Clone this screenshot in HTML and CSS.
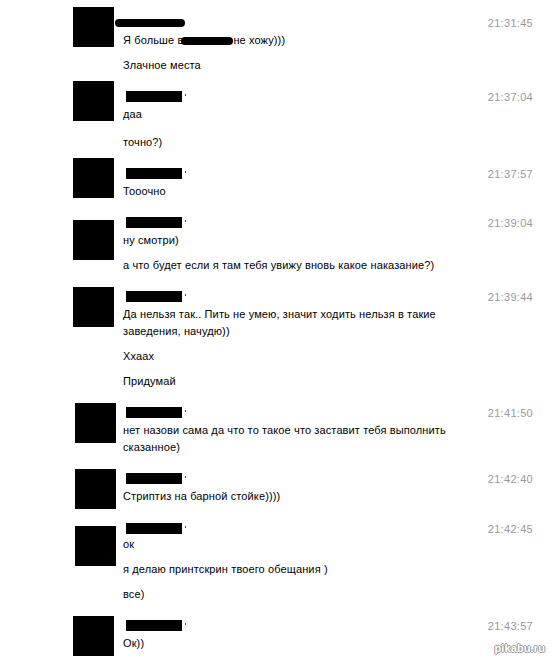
FILE: index.html
```html
<html>
<link rel="stylesheet" href="styles.css">

<head>
    <title>История сообщений</title>
</head>

<body>
    <div class="history">
        <div class="msg">
            <div class="ava"></div>
            <div class="body">
                <div class="head"><span class="name blob"></span><span class="time">21:31:45</span></div>
                <p>Я больше в<span class="hide"></span>не хожу)))</p>
                <p>Злачное места</p>
            </div>
        </div>

        <div class="msg">
            <div class="ava"></div>
            <div class="body">
                <div class="head"><span class="name"></span><span class="dot"></span><span class="time">21:37:04</span></div>
                <p>даа</p>
                <p class="far">точно?)</p>
            </div>
        </div>

        <div class="msg">
            <div class="ava"></div>
            <div class="body">
                <div class="head"><span class="name"></span><span class="dot"></span><span class="time">21:37:57</span></div>
                <p>Тооочно</p>
            </div>
        </div>

        <div class="msg">
            <div class="ava down"></div>
            <div class="body">
                <div class="head"><span class="name"></span><span class="dot"></span><span class="time">21:39:04</span></div>
                <p>ну смотри)</p>
                <p>а что будет если я там тебя увижу вновь какое наказание?)</p>
            </div>
        </div>

        <div class="msg">
            <div class="ava flat"></div>
            <div class="body">
                <div class="head"><span class="name"></span><span class="dot"></span><span class="time">21:39:44</span></div>
                <p>Да нельзя так.. Пить не умею, значит ходить нельзя в такие заведения, начудю))</p>
                <p>Ххаах</p>
                <p>Придумай</p>
            </div>
        </div>

        <div class="msg">
            <div class="ava flat shift"></div>
            <div class="body">
                <div class="head"><span class="name"></span><span class="dot"></span><span class="time">21:41:50</span></div>
                <p>нет назови сама да что то такое что заставит тебя выполнить сказанное)</p>
            </div>
        </div>

        <div class="msg">
            <div class="ava flat shift"></div>
            <div class="body">
                <div class="head"><span class="name"></span><span class="dot"></span><span class="time">21:42:40</span></div>
                <p>Стриптиз на барной стойке))))</p>
            </div>
        </div>

        <div class="msg tight">
            <div class="ava down shift"></div>
            <div class="body">
                <div class="head"><span class="name"></span><span class="dot"></span><span class="time">21:42:45</span></div>
                <p>ок</p>
                <p>я делаю принтскрин твоего обещания )</p>
                <p>все)</p>
            </div>
        </div>

        <div class="msg">
            <div class="ava flat"></div>
            <div class="body">
                <div class="head"><span class="name"></span><span class="dot"></span><span class="time">21:43:57</span></div>
                <p>Ок))</p>
            </div>
        </div>
    </div>

    <div class="mark">pikabu.ru</div>
</body>

</html>
```

FILE: styles.css
```css
body {
    margin: 0;
    height: 659px;
    overflow: hidden;
    position: relative;
    background-color: #fff;
    color: #000;
    font-family: "Liberation Sans", Arial, sans-serif;
    font-size: 11px;
    letter-spacing: 0.12px;
}

.history {
    display: flex;
    flex-direction: column;
    gap: 14px;
    padding: 14px 19px 0 73px;
}

.msg {
    display: flex;
    gap: 9px;
}

.msg.tight {
    margin-top: -3px;
}

.msg.tight .head {
    margin-bottom: -9px;
}

.ava {
    flex: none;
    width: 41px;
    height: 40px;
    margin-top: -7px;
    background-color: #000;
}

.ava.flat {
    margin-top: -1px;
}

.ava.down {
    margin-top: 6px;
}

.ava.shift {
    margin-left: 2px;
    margin-right: -2px;
}

.body {
    flex: 1;
    display: flex;
    flex-direction: column;
    gap: 8px;
}

.head {
    display: flex;
    align-items: center;
    height: 17px;
    margin-bottom: -7px;
}

.name {
    width: 56px;
    height: 11px;
    margin-left: 3px;
    background-color: #000;
}

.name.blob {
    width: 70px;
    height: 8px;
    margin-left: -8px;
    border-radius: 4px;
}

.dot {
    width: 1px;
    height: 2px;
    margin: 0 0 4px 3px;
    background-color: #555;
}

.time {
    margin-left: auto;
    color: #999;
    letter-spacing: 0.3px;
}

p {
    margin: 0;
    max-width: 330px;
    line-height: 17px;
}

p.far {
    margin-top: 3px;
}

.hide {
    display: inline-block;
    width: 52px;
    height: 8px;
    margin-left: -2px;
    border-radius: 4px;
    background-color: #000;
    vertical-align: -1px;
}

.mark {
    position: absolute;
    right: 7px;
    bottom: 5px;
    font-weight: bold;
    font-size: 11px;
    color: #fff;
    text-shadow: 1px 0 #999, -1px 0 #999, 0 1px #999, 0 -1px #999;
}
```
